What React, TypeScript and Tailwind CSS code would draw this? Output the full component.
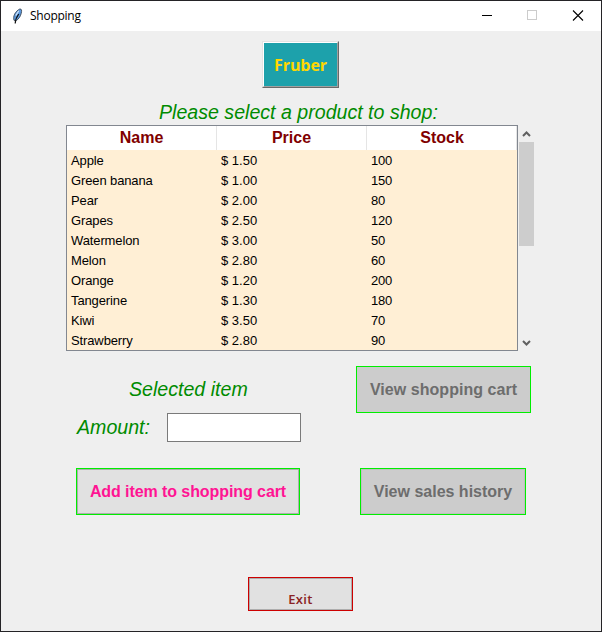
import React from "react";

const products = [
  ["Apple", "$ 1.50", "100"],
  ["Green banana", "$ 1.00", "150"],
  ["Pear", "$ 2.00", "80"],
  ["Grapes", "$ 2.50", "120"],
  ["Watermelon", "$ 3.00", "50"],
  ["Melon", "$ 2.80", "60"],
  ["Orange", "$ 1.20", "200"],
  ["Tangerine", "$ 1.30", "180"],
  ["Kiwi", "$ 3.50", "70"],
  ["Strawberry", "$ 2.80", "90"],
];

function FeatherIcon() {
  return (
    <svg className="ml-[11px] h-4 w-3" viewBox="0 0 12 16">
      <path d="M2 12.300C.8 8.500 3 3.500 7.800 1c2-.3 2.100 1.800 1.400 4.400C8.400 8.600 6.600 11.300 4 12.600Z" fill="#5c9ae0" stroke="#3a4653" strokeWidth="0.900" />
      <path d="M3.200 15.500C3.300 12 4.800 8.500 6.800 6" fill="none" stroke="#111" strokeWidth="1.200" />
      <path d="M6.800 2.800 3.800 7.500" stroke="#dcebfa" strokeWidth="1.100" />
    </svg>
  );
}

function TitleBar() {
  return (
    <header className="flex h-[30px] shrink-0 items-center bg-white text-black">
      <FeatherIcon />
      <span className="ml-[6px] font-['Open_Sans','Noto_Sans',sans-serif] text-[12px] leading-4 tracking-[-0.25px]">Shopping</span>
      <svg className="ml-auto h-[30px] w-[138px]" viewBox="0 0 138 30" fill="none" shapeRendering="crispEdges">
        <path d="M19 14.500h10" stroke="#000" />
        <path d="M64.500 9.500h9v9h-9z" stroke="#ccc" />
        <path d="m110 9.500 10 10m0-10-10 10" stroke="#000" shapeRendering="auto" strokeWidth="1.100" />
      </svg>
    </header>
  );
}

function ProductTable() {
  return (
    <div className="ml-[65px] flex h-[226px]">
      <div className="w-[452px] border border-[#828790] bg-[#ffefd5]">
        <div className="flex h-6 bg-white text-center text-[16px] leading-[23px] font-bold text-[#800000]">
          <div className="w-[150px] border-r border-[#e5e5e5]">Name</div>
          <div className="w-[150px] border-r border-[#e5e5e5]">Price</div>
          <div className="w-[150px] border-r border-[#e5e5e5] pl-px">Stock</div>
        </div>
        {products.map(([name, price, stock]) => (
          <div key={name} className="flex h-5 text-[13px] leading-[21px] text-black">
            <div className="w-[150px] pl-1 tracking-[-0.12px]">{name}</div>
            <div className="w-[150px] pl-1">{price}</div>
            <div className="w-[150px] pl-1 tracking-[-0.2px]">{stock}</div>
          </div>
        ))}
      </div>
      <div className="ml-px flex w-[15px] flex-col">
        <svg className="h-[17px] w-[15px]" viewBox="0 0 15 17" fill="none">
          <path d="m4 11 3.500-3.500L11 11" stroke="#606060" strokeWidth="2" />
        </svg>
        <div className="h-[104px] bg-[#cdcdcd]" />
        <svg className="mt-auto h-[17px] w-[15px]" viewBox="0 0 15 17" fill="none">
          <path d="m4 7 3.500 3.500L11 7" stroke="#606060" strokeWidth="2" />
        </svg>
      </div>
    </div>
  );
}

export default function App() {
  return (
    <div className="flex h-[632px] w-[602px] flex-col border border-[#242326] bg-[#efefef] font-['Liberation_Sans',Arial,sans-serif]">
      <TitleBar />
      <main className="flex grow flex-col pt-[10px]">
        <button className="ml-[261px] h-[47px] w-[77px] border border-t-[#e3e3e3] border-r-[#696969] border-b-[#696969] border-l-[#e3e3e3]">
          <span className="flex h-[45px] items-center justify-center border border-t-white border-r-[#a0a0a0] border-b-[#a0a0a0] border-l-white bg-[#1da1ab] font-['Open_Sans','Noto_Sans',sans-serif] text-[16px] font-bold tracking-[-0.1px] text-[#ffd700]">
            Fruber
          </span>
        </button>
        <p className="ml-[158px] h-[37px] pt-[12px] text-[19.6px] leading-[24px] whitespace-nowrap text-[#008b00] italic">Please select a product to shop:</p>
        <ProductTable />
        <div className="mt-[15px] flex h-[47px]">
          <p className="ml-[128px] w-[227px] text-[19.6px] leading-[47px] text-[#008b00] italic">Selected item</p>
          <button className="h-[47px] w-[175px] border border-[#00ee00] bg-[#cccccc] text-[16px] font-bold tracking-[0.04px] text-[#6d6d6d]">View shopping cart</button>
        </div>
        <div className="flex h-[29px]">
          <label htmlFor="amount" className="ml-[76px] w-[90px] text-[19.6px] leading-[29px] text-[#008b00] italic">Amount:</label>
          <input id="amount" className="h-[29px] w-[134px] border border-[#7a7a7a] bg-white px-1 outline-none" />
        </div>
        <div className="mt-[26px] flex h-[47px]">
          <button className="ml-[75px] h-[47px] w-[224px] border border-[#00ee00]">
            <span className="flex h-[45px] items-center justify-center border border-[#adadad] bg-[#e1e1e1] text-[16px] font-bold tracking-[-0.08px] text-[#ff1493]">Add item to shopping cart</span>
          </button>
          <button className="ml-[60px] h-[47px] w-[166px] border border-[#00ee00]">
            <span className="flex h-[45px] items-center justify-center border border-[#bfbfbf] bg-[#cccccc] text-[16px] font-bold text-[#6d6d6d]">View sales history</span>
          </button>
        </div>
        <button className="mt-[62px] ml-[247px] h-[34px] w-[105px] border border-[#cd0000]">
          <span className="flex h-[32px] items-center justify-center border border-[#adadad] bg-[#e1e1e1] pt-[12px] font-['Open_Sans','Noto_Sans',sans-serif] text-[13px] font-semibold tracking-[0.35px] text-[#8b2323]">Exit</span>
        </button>
      </main>
    </div>
  );
}
